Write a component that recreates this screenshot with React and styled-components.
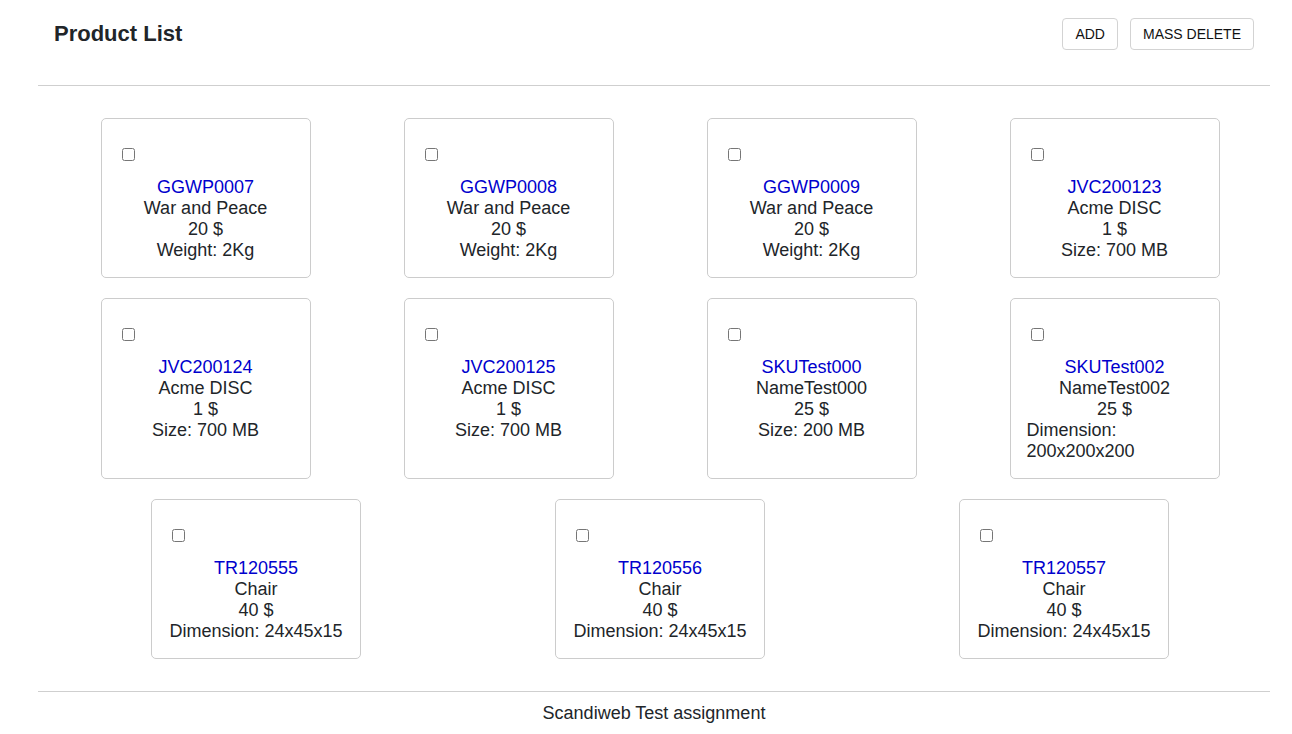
import styled, { createGlobalStyle } from "styled-components";

const GlobalStyle = createGlobalStyle`
  body {
    margin: 0;
    background: #ffffff;
    color: #212529;
    font-family: "Liberation Sans", Arial, sans-serif;
  }
`;

const products = [
  { sku: "GGWP0007", name: "War and Peace", price: 20, attr: "Weight: 2Kg" },
  { sku: "GGWP0008", name: "War and Peace", price: 20, attr: "Weight: 2Kg" },
  { sku: "GGWP0009", name: "War and Peace", price: 20, attr: "Weight: 2Kg" },
  { sku: "JVC200123", name: "Acme DISC", price: 1, attr: "Size: 700 MB" },
  { sku: "JVC200124", name: "Acme DISC", price: 1, attr: "Size: 700 MB" },
  { sku: "JVC200125", name: "Acme DISC", price: 1, attr: "Size: 700 MB" },
  { sku: "SKUTest000", name: "NameTest000", price: 25, attr: "Size: 200 MB" },
  { sku: "SKUTest002", name: "NameTest002", price: 25, attr: "Dimension: 200x200x200" },
  { sku: "TR120555", name: "Chair", price: 40, attr: "Dimension: 24x45x15" },
  { sku: "TR120556", name: "Chair", price: 40, attr: "Dimension: 24x45x15" },
  { sku: "TR120557", name: "Chair", price: 40, attr: "Dimension: 24x45x15" },
];

const Page = styled.div`
  padding: 0 22px 0 38px;
`;

const Header = styled.header`
  display: flex;
  align-items: center;
  justify-content: space-between;
  padding: 18px 16px 35px;
  border-bottom: 1px solid #cfcfcf;
`;

const Title = styled.h1`
  margin: 0;
  font-size: 22px;
  font-weight: 700;
`;

const Actions = styled.div`
  display: flex;
  gap: 12px;
`;

const Button = styled.button`
  height: 32px;
  padding: 0 12px;
  background: #ffffff;
  border: 1px solid #d3d3d3;
  border-radius: 4px;
  color: #111111;
  font-family: "Liberation Sans", Arial, sans-serif;
  font-size: 14px;
  cursor: pointer;
`;

const Grid = styled.main`
  display: flex;
  flex-wrap: wrap;
  justify-content: space-around;
  row-gap: 20px;
  margin: 32px 4px 0 16px;
`;

const Card = styled.div`
  box-sizing: border-box;
  width: 210px;
  margin: 0 24px;
  padding: 26px 16px 16px;
  border: 1px solid #cccccc;
  border-radius: 5px;
  display: flex;
  flex-direction: column;
`;

const Check = styled.input`
  width: 13px;
  height: 13px;
  margin: 3px 3px 3px 4px;
  align-self: flex-start;
`;

const Info = styled.div`
  margin-top: 13px;
  display: flex;
  flex-direction: column;
  align-items: center;
  font-size: 18px;
`;

const Line = styled.div`
  color: ${(p) => (p.$sku ? "#0000cd" : "#212529")};
`;

const Footer = styled.footer`
  margin-top: 32px;
  border-top: 1px solid #cfcfcf;
  padding-top: 11px;
  text-align: center;
  font-size: 18px;
`;

function ProductCard({ item }) {
  return (
    <Card>
      <Check type="checkbox" />
      <Info>
        <Line $sku>{item.sku}</Line>
        <Line>{item.name}</Line>
        <Line>{item.price} $</Line>
        <Line>{item.attr}</Line>
      </Info>
    </Card>
  );
}

export default function App() {
  return (
    <Page>
      <GlobalStyle />
      <Header>
        <Title>Product List</Title>
        <Actions>
          <Button>ADD</Button>
          <Button>MASS DELETE</Button>
        </Actions>
      </Header>
      <Grid>
        {products.map((item) => (
          <ProductCard key={item.sku} item={item} />
        ))}
      </Grid>
      <Footer>Scandiweb Test assignment</Footer>
    </Page>
  );
}
